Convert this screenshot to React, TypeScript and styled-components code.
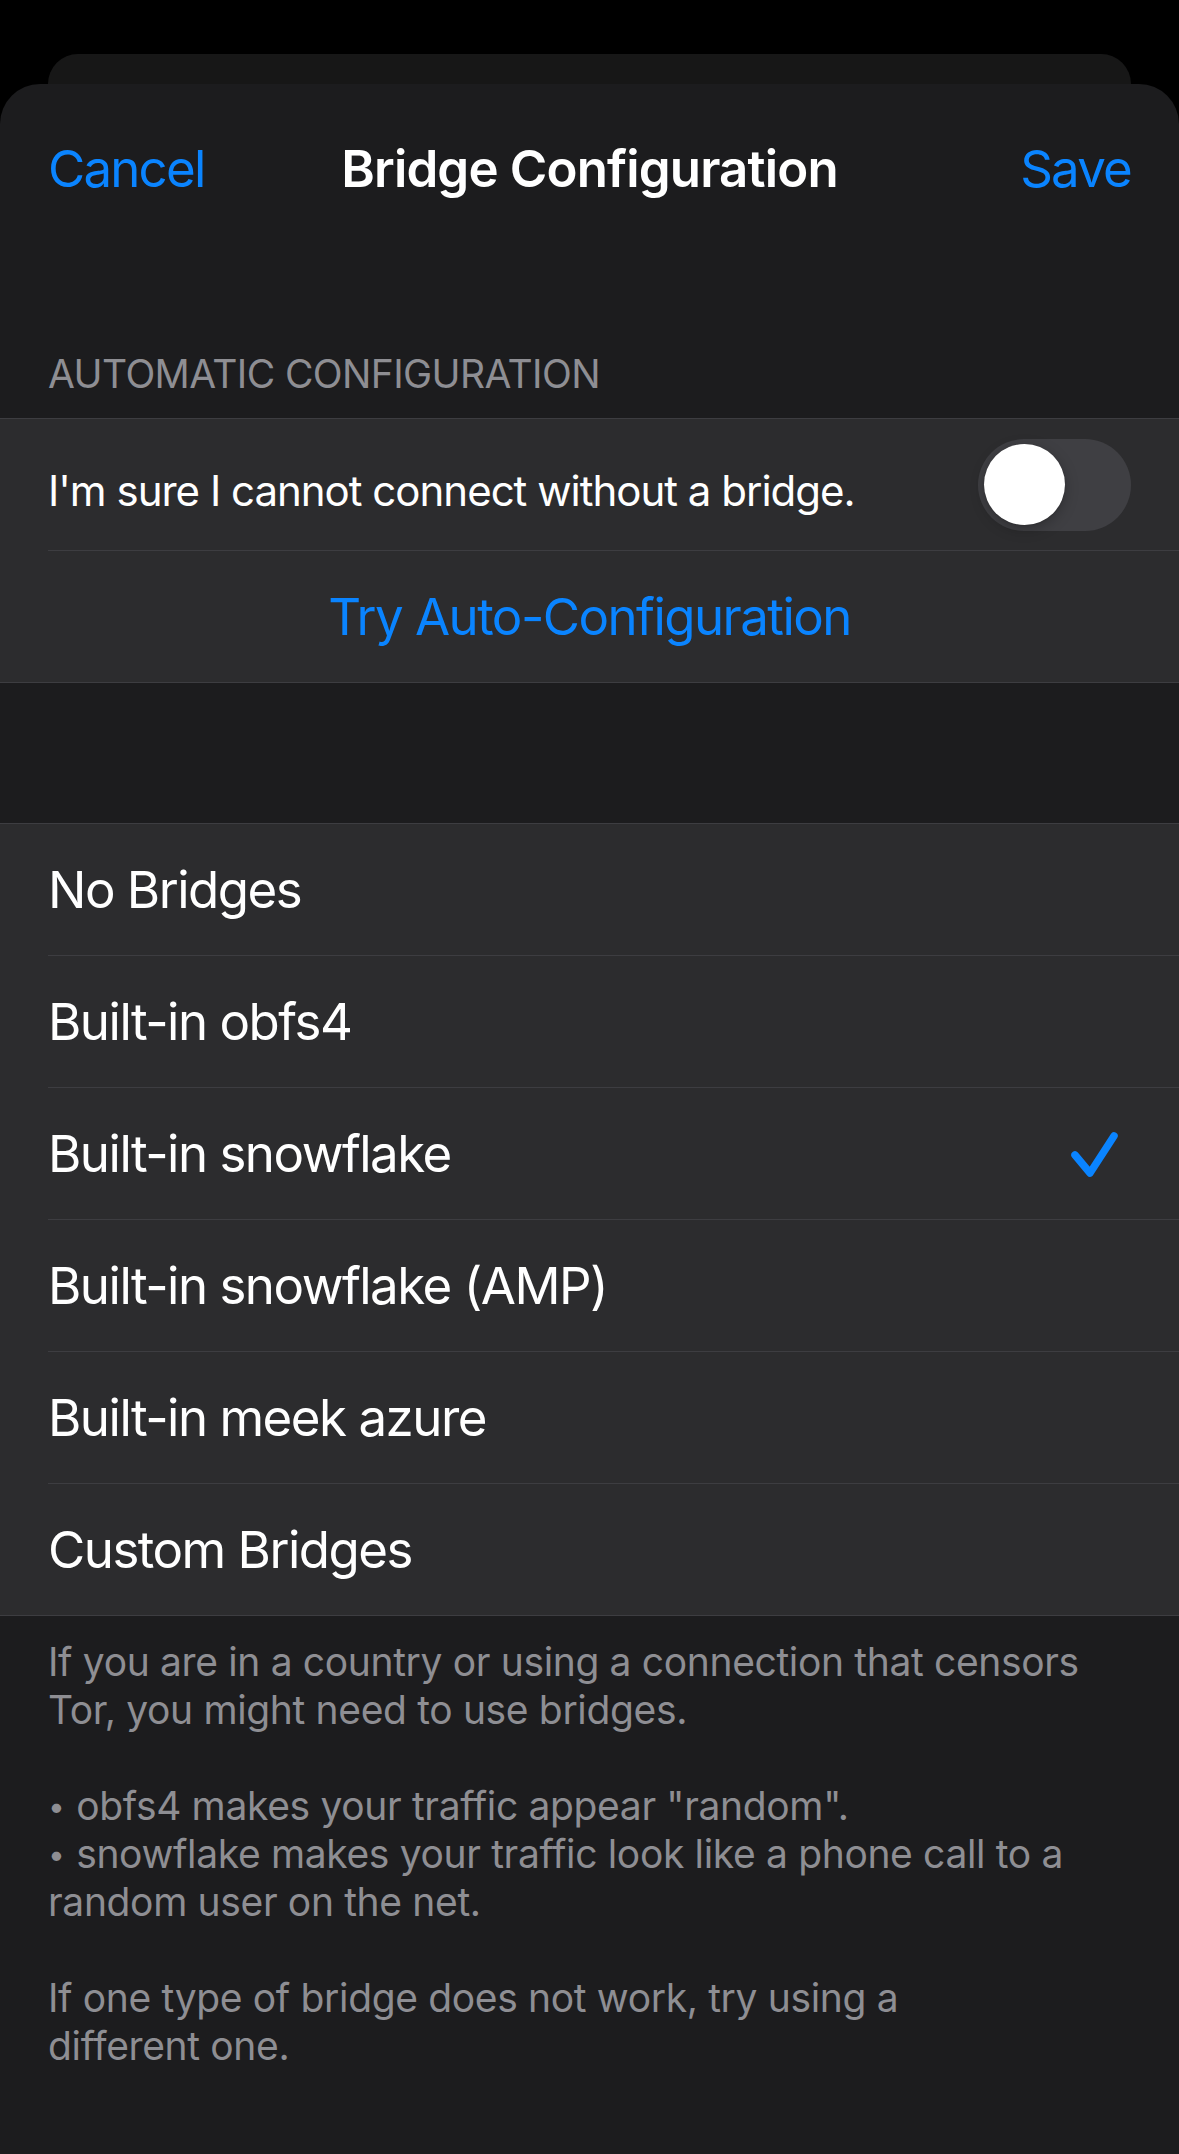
import React from "react";
import styled, { createGlobalStyle } from "styled-components";

const Global = createGlobalStyle`
  html, body {
    margin: 0;
    padding: 0;
    background: #000;
  }
  body {
    font-family: Inter, "Noto Sans", "Liberation Sans", sans-serif;
    -webkit-font-smoothing: antialiased;
  }
  #root {
    min-height: 2154px;
    background: #000;
  }
`;

const Screen = styled.div`
  width: 1179px;
  min-height: 2154px;
  display: flex;
  flex-direction: column;
  background: #000;
  overflow: hidden;
`;

const BackCard = styled.div`
  margin: 54px 48px 0;
  height: 30px;
  background: #171717;
  border-radius: 36px 36px 0 0;
`;

const Sheet = styled.div`
  flex: 1;
  display: flex;
  flex-direction: column;
  background: #1c1c1e;
  border-radius: 40px 40px 0 0;
`;

const NavBar = styled.div`
  height: 168px;
  display: grid;
  grid-template-columns: 1fr auto 1fr;
  align-items: center;
  padding: 0 48px;
`;

const NavButton = styled.span<{ $align: "left" | "right" }>`
  justify-self: ${(p) => (p.$align === "left" ? "start" : "end")};
  color: #0a84ff;
  font-size: 51px;
  font-weight: 400;
  letter-spacing: -1.8px;
`;

const NavTitle = styled.span`
  color: #fff;
  font-size: 51px;
  font-weight: 600;
  letter-spacing: -0.85px;
`;

const SectionHeader = styled.div`
  padding: 98px 48px 20px;
  color: #8e8e93;
  font-size: 39px;
  line-height: 48px;
  letter-spacing: -0.6px;
`;

const Section = styled.div<{ $gapTop?: number }>`
  margin-top: ${(p) => p.$gapTop ?? 0}px;
  background: #2c2c2e;
  border-top: 1px solid #3d3d41;
  border-bottom: 1px solid #3d3d41;
  display: flex;
  flex-direction: column;
`;

const Row = styled.div<{ $center?: boolean }>`
  height: 131px;
  display: flex;
  align-items: center;
  justify-content: ${(p) => (p.$center ? "center" : "space-between")};
  padding: 0 48px;
`;

const Separator = styled.div`
  height: 1px;
  margin-left: 48px;
  background: #3d3d41;
`;

const Label = styled.span`
  color: #fff;
  font-size: 51px;
  letter-spacing: -1.5px;
`;

const SmallLabel = styled.span`
  color: #fff;
  font-size: 42px;
  letter-spacing: -1px;
  margin-top: 12px;
`;

const ActionLabel = styled.span`
  color: #0a84ff;
  font-size: 51px;
  letter-spacing: -1.55px;
`;

const Track = styled.div`
  width: 153px;
  height: 92px;
  border-radius: 46px;
  background: #3f3f43;
  display: flex;
  align-items: center;
  box-sizing: border-box;
  padding-left: 6px;
`;

const Knob = styled.div`
  width: 81px;
  height: 81px;
  border-radius: 50%;
  background: #fff;
  box-shadow: 0 4px 14px rgba(0, 0, 0, 0.25), 0 1px 2px rgba(0, 0, 0, 0.12);
`;

const CheckRow = styled(Row)`
  padding-right: 61px;
`;

const Footer = styled.div`
  padding: 22px 48px 0;
  color: #8e8e93;
  font-size: 39px;
  line-height: 48px;
  letter-spacing: -0.35px;
  display: flex;
  flex-direction: column;
  gap: 48px;
`;

const Paragraph = styled.p`
  margin: 0;
`;

const Bullet = styled.span`
  font-size: 30px;
  vertical-align: 3px;
  margin-right: 1px;
`;

const Check = () => (
  <svg width="48" height="50" viewBox="0 0 48 50" fill="none">
    <path
      d="M5 26 L20 44 L44 7"
      stroke="#0a84ff"
      strokeWidth="7.5"
      strokeLinecap="round"
      strokeLinejoin="round"
    />
  </svg>
);

const bridges = [
  "No Bridges",
  "Built-in obfs4",
  "Built-in snowflake",
  "Built-in snowflake (AMP)",
  "Built-in meek azure",
  "Custom Bridges",
];

const selected = "Built-in snowflake";

export default function App() {
  return (
    <Screen>
      <Global />
      <BackCard />
      <Sheet>
        <NavBar>
          <NavButton $align="left">Cancel</NavButton>
          <NavTitle>Bridge Configuration</NavTitle>
          <NavButton $align="right">Save</NavButton>
        </NavBar>

        <SectionHeader>AUTOMATIC CONFIGURATION</SectionHeader>
        <Section>
          <Row>
            <SmallLabel>I'm sure I cannot connect without a bridge.</SmallLabel>
            <Track>
              <Knob />
            </Track>
          </Row>
          <Separator />
          <Row $center>
            <ActionLabel>Try Auto-Configuration</ActionLabel>
          </Row>
        </Section>

        <Section $gapTop={140}>
          {bridges.map((b, i) => (
            <React.Fragment key={b}>
              {i > 0 && <Separator />}
              {b === selected ? (
                <CheckRow>
                  <Label>{b}</Label>
                  <Check />
                </CheckRow>
              ) : (
                <Row>
                  <Label>{b}</Label>
                </Row>
              )}
            </React.Fragment>
          ))}
        </Section>

        <Footer>
          <Paragraph>
            If you are in a country or using a connection that censors
            <br />
            Tor, you might need to use bridges.
          </Paragraph>
          <Paragraph>
            <Bullet>•</Bullet> obfs4 makes your traffic appear "random".
            <br />
            <Bullet>•</Bullet> snowflake makes your traffic look like a phone call to a
            <br />
            random user on the net.
          </Paragraph>
          <Paragraph>
            If one type of bridge does not work, try using a
            <br />
            different one.
          </Paragraph>
        </Footer>
      </Sheet>
    </Screen>
  );
}
